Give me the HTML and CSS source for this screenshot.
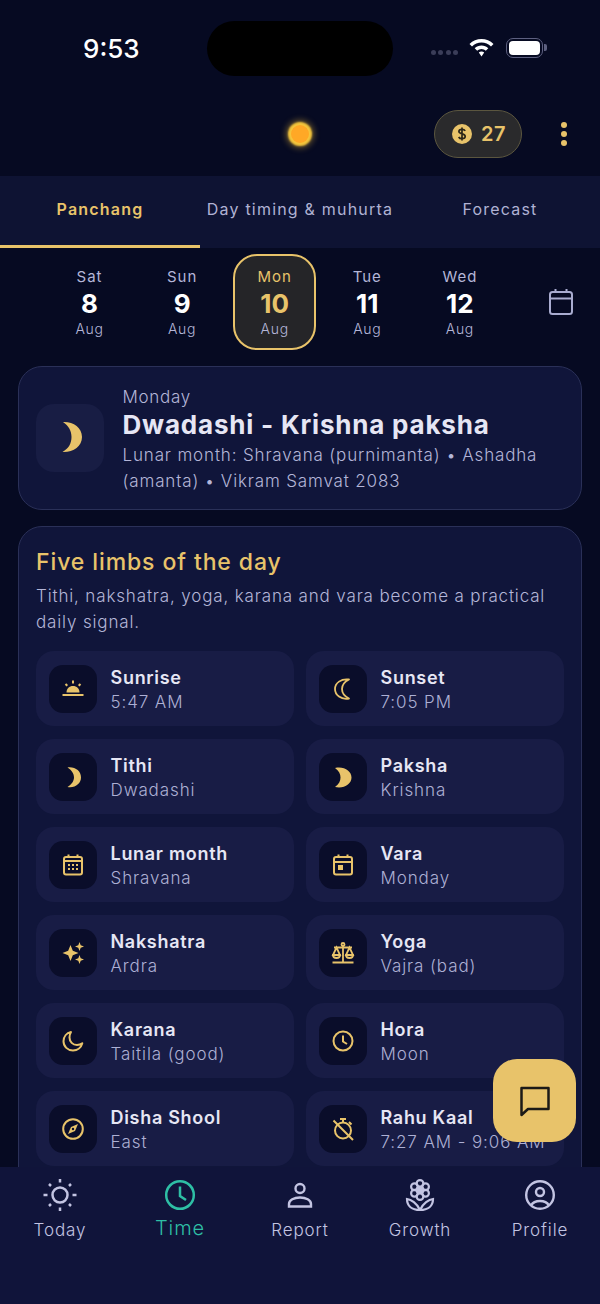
FILE: index.html
```html
<!DOCTYPE html>
<html lang="en">
<head>
    <meta charset="UTF-8">
    <meta name="viewport" content="width=device-width, initial-scale=1.0">
    <title>Panchang</title>
    <link rel="stylesheet" href="styles.css">
</head>
<body>
<div class="screen">

    <div class="status-bar">
        <span class="clock">9:53</span>
        <div class="island"></div>
        <div class="status-icons">
            <div class="signal"><i></i><i></i><i></i><i></i></div>
            <svg class="wifi" viewBox="0 0 25 19" width="25" height="19"><path d="M12.500 1C8 1 3.700 2.800 .5 5.900L3 8.500C5.500 6 8.900 4.500 12.500 4.500S19.500 6 22 8.500L24.500 5.900C21.300 2.800 17 1 12.500 1Z M12.500 7.500C10 7.500 7.500 8.500 5.700 10.300L8.200 12.800C9.400 11.700 10.900 11 12.500 11S15.600 11.700 16.800 12.800L19.300 10.300C17.500 8.500 15 7.500 12.500 7.500Z M12.500 13.500C11.500 13.500 10.500 13.900 9.800 14.600L12.500 18.500L15.200 14.600C14.500 13.900 13.500 13.500 12.500 13.500Z" fill="#fff"/></svg>
            <div class="battery"><div class="battery-level"></div></div>
        </div>
    </div>

    <header class="top-bar">
        <div class="sun-dot"></div>
        <div class="coins">
            <svg viewBox="0 0 20 20" width="20" height="20"><circle cx="10" cy="10" r="10" fill="#e8c36a"/><path d="M13.200 6.800C12.700 5.900 11.500 5.300 10 5.300C8.200 5.300 6.900 6.200 6.900 7.600C6.900 10.600 13.200 9.200 13.200 12.300C13.200 13.700 11.800 14.700 10 14.700C8.400 14.700 7.200 14 6.700 13M10 3.500V16.500" fill="none" stroke="#2b2618" stroke-width="1.700"/></svg>
            <span>27</span>
        </div>
        <div class="kebab"><i></i><i></i><i></i></div>
    </header>

    <nav class="tabs">
        <a class="tab active">Panchang</a>
        <a class="tab">Day timing &amp; muhurta</a>
        <a class="tab">Forecast</a>
    </nav>

    <div class="days">
        <div class="day"><span class="dow">Sat</span><b>8</b><span class="mon">Aug</span></div>
        <div class="day"><span class="dow">Sun</span><b>9</b><span class="mon">Aug</span></div>
        <div class="day selected"><span class="dow">Mon</span><b>10</b><span class="mon">Aug</span></div>
        <div class="day"><span class="dow">Tue</span><b>11</b><span class="mon">Aug</span></div>
        <div class="day"><span class="dow">Wed</span><b>12</b><span class="mon">Aug</span></div>
        <svg class="cal-btn" viewBox="0 0 26 28" width="26" height="28" fill="none" stroke="#a9acd0" stroke-width="2"><rect x="2" y="4" width="22" height="22" rx="2.500"/><path d="M2 10.500H24M7.500 1V4M18.500 1V4"/></svg>
    </div>

    <main class="content">
        <section class="hero-card">
            <div class="hero-icon">
                <svg viewBox="0 0 24 36" width="24" height="36"><path d="M2 2C12 1.500 21 7.500 21 17C21 26.500 12 32.500 1.500 32C7.500 28.500 10.500 23.500 10.500 17C10.500 11 7.500 5.500 2 2Z" fill="#e8c36a"/></svg>
            </div>
            <div class="hero-text">
                <div class="hero-day">Monday</div>
                <h1>Dwadashi - Krishna paksha</h1>
                <p>Lunar month: Shravana (purnimanta) • Ashadha (amanta) • Vikram Samvat 2083</p>
            </div>
        </section>

        <section class="limbs-card">
            <h2>Five limbs of the day</h2>
            <p class="limbs-sub">Tithi, nakshatra, yoga, karana and vara become a practical daily signal.</p>
            <div class="limbs-grid">

                <div class="limb">
                    <div class="limb-icon"><svg viewBox="0 0 24 24" width="24" height="24"><path d="M5.500 15.500C5.500 11.500 8.300 9 12 9S18.500 11.500 18.500 15.500Z" fill="#e8c36a"/><path d="M1.500 18H22.500" stroke="#e8c36a" stroke-width="2"/><path d="M12 3.500V6.500M4.500 7L6.300 8.800M19.500 7L17.700 8.800" stroke="#e8c36a" stroke-width="2" fill="none"/></svg></div>
                    <div class="limb-text"><b>Sunrise</b><span>5:47 AM</span></div>
                </div>
                <div class="limb">
                    <div class="limb-icon"><svg viewBox="0 0 24 24" width="24" height="24"><path d="M18 2.500C10 1.500 4 6 4 12C4 18 10 23 18 21.500C14 19.500 11 16 11 12C11 8 14 4.500 18 2.500Z" fill="none" stroke="#e8c36a" stroke-width="1.800" stroke-linejoin="round"/></svg></div>
                    <div class="limb-text"><b>Sunset</b><span>7:05 PM</span></div>
                </div>

                <div class="limb">
                    <div class="limb-icon"><svg viewBox="0 0 24 24" width="24" height="24"><path d="M6.500 2.500C14 1.500 20 6 20 12.500C20 18.500 14 23.500 6.500 22C10.500 19.500 13 16 13 12.500C13 8.500 10.500 5 6.500 2.500Z" fill="#e8c36a"/></svg></div>
                    <div class="limb-text"><b>Tithi</b><span>Dwadashi</span></div>
                </div>
                <div class="limb">
                    <div class="limb-icon"><svg viewBox="0 0 24 24" width="24" height="24"><path d="M4 3C13 1 20.500 6 20.500 12.500C20.500 19 13 24 4 22C8 19 9.500 16 9.500 12.500C9.500 9 8 6 4 3Z" fill="#e8c36a"/></svg></div>
                    <div class="limb-text"><b>Paksha</b><span>Krishna</span></div>
                </div>

                <div class="limb">
                    <div class="limb-icon"><svg viewBox="0 0 24 24" width="24" height="24" fill="none" stroke="#e8c36a" stroke-width="2"><rect x="3" y="4" width="18" height="17.500" rx="2"/><path d="M3 8H21M7.500 1.500V4M16.500 1.500V4"/><path d="M7 12H9M11 12H13M15 12H17M7 16H9M11 16H13M15 16H17"/></svg></div>
                    <div class="limb-text"><b>Lunar month</b><span>Shravana</span></div>
                </div>
                <div class="limb">
                    <div class="limb-icon"><svg viewBox="0 0 24 24" width="24" height="24" fill="none" stroke="#e8c36a" stroke-width="2"><rect x="3" y="4" width="18" height="17.500" rx="2"/><path d="M3 9H21M7.500 1.500V4M16.500 1.500V4"/><rect x="7" y="12" width="5" height="5" fill="#e8c36a" stroke="none"/></svg></div>
                    <div class="limb-text"><b>Vara</b><span>Monday</span></div>
                </div>

                <div class="limb">
                    <div class="limb-icon"><svg viewBox="0 0 24 24" width="24" height="24" fill="#e8c36a"><path d="M9.500 4L11.800 9.700L17.500 12L11.800 14.300L9.500 20L7.200 14.300L1.500 12L7.200 9.700Z"/><path d="M18.500 1L19.700 4.300L23 5.500L19.700 6.700L18.500 10L17.300 6.700L14 5.500L17.300 4.300Z"/><path d="M18.500 14L19.700 17.300L23 18.500L19.700 19.700L18.500 23L17.300 19.700L14 18.500L17.300 17.300Z"/></svg></div>
                    <div class="limb-text"><b>Nakshatra</b><span>Ardra</span></div>
                </div>
                <div class="limb">
                    <div class="limb-icon"><svg viewBox="0 0 24 24" width="24" height="24" fill="none" stroke="#e8c36a" stroke-width="1.800"><circle cx="12" cy="3.500" r="1.500"/><path d="M12 5V21M1.500 21.500H22.500M3 6.500H21"/><path d="M5.500 6.500L2 14H9ZM18.500 6.500L15 14H22Z"/><path d="M2 14C2 18 9 18 9 14ZM15 14C15 18 22 18 22 14Z"/></svg></div>
                    <div class="limb-text"><b>Yoga</b><span>Vajra (bad)</span></div>
                </div>

                <div class="limb">
                    <div class="limb-icon"><svg viewBox="0 0 24 24" width="24" height="24"><path d="M10 3C5.500 4 2.500 7.800 2.500 12.300C2.500 17.500 6.700 21.500 12 21.500C16.500 21.500 20.200 18.500 21.300 14.300C19.800 15.500 18 16 16 16C11.800 16 8.500 12.800 8.500 8.500C8.500 6.500 9 4.500 10 3Z" fill="none" stroke="#e8c36a" stroke-width="2" stroke-linejoin="round"/></svg></div>
                    <div class="limb-text"><b>Karana</b><span>Taitila (good)</span></div>
                </div>
                <div class="limb">
                    <div class="limb-icon"><svg viewBox="0 0 24 24" width="24" height="24" fill="none" stroke="#e8c36a" stroke-width="2"><circle cx="12" cy="12" r="9.500"/><path d="M12 6.500V12.500L16 15"/></svg></div>
                    <div class="limb-text"><b>Hora</b><span>Moon</span></div>
                </div>

                <div class="limb">
                    <div class="limb-icon"><svg viewBox="0 0 24 24" width="24" height="24" fill="none" stroke="#e8c36a" stroke-width="2"><circle cx="12" cy="12" r="9.800"/><path d="M17 7L14 14L7 17L10 10Z" fill="#e8c36a" stroke="none"/><circle cx="12" cy="12" r="1.200" fill="#0a0d2a" stroke="none"/></svg></div>
                    <div class="limb-text"><b>Disha Shool</b><span>East</span></div>
                </div>
                <div class="limb">
                    <div class="limb-icon"><svg viewBox="0 0 24 24" width="24" height="24" fill="none" stroke="#e8c36a" stroke-width="2"><circle cx="12" cy="13.500" r="8"/><path d="M9 2H15M12 2V5M18 5L20.500 7.500M2.500 3.500L22 23"/></svg></div>
                    <div class="limb-text"><b>Rahu Kaal</b><span>7:27 AM - 9:06 AM</span></div>
                </div>

            </div>
        </section>

        <button class="chat-fab">
            <svg viewBox="0 0 34 34" width="34" height="34" fill="none" stroke="#1c1a17" stroke-width="2.500" stroke-linejoin="round"><path d="M3.500 4H30.500V25H10L3.500 31Z"/></svg>
        </button>
    </main>

    <nav class="bottom-nav">
        <a class="nav-item">
            <svg viewBox="0 0 34 34" width="34" height="34" fill="none" stroke="#c3c4e2" stroke-width="2.500"><circle cx="17" cy="17" r="7.500"/><path d="M17 1V4.500M17 29.500V33M.5 17H4.500M29.500 17H33.500M6 6L8 8M26 26L28 28M6 28L8 26M26 8L28 6"/></svg>
            <span>Today</span>
        </a>
        <a class="nav-item current">
            <svg viewBox="0 0 34 34" width="34" height="34" fill="none" stroke="#2ebfa5" stroke-width="2.500"><circle cx="17" cy="17" r="13.800"/><path d="M17 8.500V18L23 22"/></svg>
            <span>Time</span>
        </a>
        <a class="nav-item">
            <svg viewBox="0 0 34 34" width="34" height="34" fill="none" stroke="#c3c4e2" stroke-width="2.400"><circle cx="17" cy="10.500" r="4.500"/><path d="M6 28.500V26C6 22 11 19.500 17 19.500S28 22 28 26V28.500Z"/></svg>
            <span>Report</span>
        </a>
        <a class="nav-item">
            <svg viewBox="0 0 34 34" width="34" height="34" fill="none" stroke="#c3c4e2" stroke-width="2.200"><circle cx="17" cy="12" r="3.500" fill="#c3c4e2"/><circle cx="17" cy="5.500" r="3.400"/><circle cx="17" cy="18.500" r="3.400"/><circle cx="11.500" cy="8.800" r="3.400"/><circle cx="22.500" cy="8.800" r="3.400"/><circle cx="11.500" cy="15.200" r="3.400"/><circle cx="22.500" cy="15.200" r="3.400"/><path d="M17 32C14 25 8 21.500 4 21C4 28 9 32 17 32ZM17 32C20 25 26 21.500 30 21C30 28 25 32 17 32Z"/></svg>
            <span>Growth</span>
        </a>
        <a class="nav-item">
            <svg viewBox="0 0 34 34" width="34" height="34" fill="none" stroke="#c3c4e2" stroke-width="2.400"><circle cx="17" cy="17" r="13.800"/><circle cx="17" cy="14" r="4"/><path d="M8 27.500C10 24 13 23 17 23S24 24 26 27.500"/></svg>
            <span>Profile</span>
        </a>
    </nav>

</div>
</body>
</html>
```

FILE: styles.css
```css
/* Reset */
* {
    margin: 0;
    padding: 0;
    box-sizing: border-box;
}

body {
    font-family: Inter, "Liberation Sans", sans-serif;
    background-color: #060a22;
    color: #e9e9f6;
}

.screen {
    width: 600px;
    height: 1304px;
    display: flex;
    flex-direction: column;
    overflow: hidden;
    background-color: #060a22;
}

/* Status bar */
.status-bar {
    height: 92px;
    flex: none;
    display: flex;
    justify-content: space-between;
    align-items: flex-start;
    position: relative;
    padding: 34px 57px 0 83px;
}

.clock {
    font-size: 26px;
    line-height: 30px;
    font-weight: 500;
    color: #fff;
}

.island {
    position: absolute;
    left: 207px;
    top: 21px;
    width: 186px;
    height: 55px;
    border-radius: 28px;
    background-color: #000;
}

.status-icons {
    display: flex;
    align-items: center;
    gap: 11px;
    height: 30px;
    margin-top: -1px;
}

.signal {
    display: flex;
    gap: 2.500px;
    margin-top: 8px;
}

.signal i {
    width: 5px;
    height: 5px;
    border-radius: 50%;
    background-color: #3a3d58;
}

.wifi {
    margin-top: -1px;
}

.battery {
    width: 37px;
    height: 20px;
    border: 1.500px solid #5d6080;
    border-radius: 7px;
    padding: 2px;
    margin-left: 1px;
    position: relative;
}

.battery::after {
    content: "";
    position: absolute;
    right: -5px;
    top: 5px;
    width: 3px;
    height: 7px;
    border-radius: 0 2px 2px 0;
    background-color: #5d6080;
}

.battery-level {
    height: 100%;
    border-radius: 4px;
    background-color: #fff;
}

/* Top bar */
.top-bar {
    height: 84px;
    flex: none;
    position: relative;
    display: flex;
    justify-content: flex-end;
    align-items: center;
    gap: 39px;
    padding: 0 33px 0 0;
}

.sun-dot {
    position: absolute;
    left: 291px;
    top: 33px;
    width: 18px;
    height: 18px;
    border-radius: 50%;
    background-color: #ffa826;
    box-shadow: 0 0 2px 3px #f5c63c, 0 0 6px 5px rgba(242, 190, 60, 0.4);
}

.coins {
    width: 88px;
    height: 48px;
    display: flex;
    align-items: center;
    justify-content: center;
    gap: 9px;
    padding-left: 2px;
    border: 1.500px solid #5b563f;
    border-radius: 24px;
    background-color: #2a2a2c;
    color: #e8c36a;
    font-size: 20px;
    font-weight: 600;
    letter-spacing: 0.5px;
}

.kebab {
    display: flex;
    flex-direction: column;
    gap: 3px;
}

.kebab i {
    width: 6px;
    height: 6px;
    border-radius: 50%;
    background-color: #e8c36a;
}

/* Tabs */
.tabs {
    height: 72px;
    flex: none;
    display: flex;
    background-color: #0e1333;
}

.tab {
    flex: 1;
    display: flex;
    align-items: center;
    justify-content: center;
    padding-bottom: 3px;
    font-size: 16px;
    letter-spacing: 1.2px;
    color: #b0b2d4;
    border-bottom: 3px solid transparent;
}

.tab.active {
    color: #e8c36a;
    font-weight: 600;
    border-bottom-color: #e8c36a;
}

/* Date strip */
.days {
    height: 118px;
    flex: none;
    display: flex;
    align-items: flex-start;
    padding: 6px 0 0 48px;
    position: relative;
}

.day {
    width: 83px;
    height: 96px;
    margin-right: 9.600px;
    display: flex;
    flex-direction: column;
    align-items: center;
    padding-top: 12px;
    border: 2px solid transparent;
    border-radius: 24px;
    color: #b4b6d8;
}

.day.selected {
    border-color: #e8c36a;
    background-color: #252528;
}

.dow {
    font-size: 15px;
    line-height: 18px;
    letter-spacing: 1px;
}

.day b {
    font-size: 26px;
    line-height: 36px;
    margin-bottom: -2px;
    font-weight: 700;
    color: #fff;
}

.mon {
    font-size: 14px;
    line-height: 18px;
    font-weight: 300;
    letter-spacing: 0.7px;
}

.day.selected .dow,
.day.selected b {
    color: #e8c36a;
}

.cal-btn {
    position: absolute;
    left: 548px;
    top: 40px;
}

/* Scrolling content */
.content {
    flex: 1;
    min-height: 0;
    padding: 0 18px;
    position: relative;
    overflow: hidden;
}

.hero-card,
.limbs-card {
    border: 1.500px solid #2a3058;
    border-radius: 24px;
    background-color: #10153a;
}

.hero-card {
    height: 144px;
    display: flex;
    align-items: center;
    gap: 19px;
    padding: 0 16.500px;
    margin-bottom: 16px;
}

.hero-icon {
    width: 68px;
    height: 68px;
    flex: none;
    display: flex;
    align-items: center;
    justify-content: center;
    border-radius: 18px;
    background-color: #181d44;
}

.hero-icon svg {
    margin-left: 6px;
}

.hero-text {
    padding-top: 4px;
}

.hero-day {
    font-size: 17px;
    line-height: 22px;
    font-weight: 300;
    color: #b4b6d8;
    letter-spacing: 0.7px;
}

.hero-text h1 {
    font-size: 26px;
    line-height: 34px;
    font-weight: 700;
    letter-spacing: 0.8px;
    color: #e6e6f4;
}

.hero-text p {
    font-size: 17px;
    line-height: 26px;
    font-weight: 300;
    letter-spacing: 0.85px;
    color: #b4b6d8;
}

.limbs-card {
    padding: 18px 16.500px 40px 17px;
}

.limbs-card h2 {
    font-size: 23px;
    line-height: 34px;
    font-weight: 500;
    letter-spacing: 0.9px;
    color: #e8c36a;
}

.limbs-sub {
    font-size: 17px;
    line-height: 26px;
    font-weight: 300;
    letter-spacing: 0.85px;
    color: #b4b6d8;
    margin-top: 4px;
    margin-bottom: 16px;
}

.limbs-grid {
    display: grid;
    grid-template-columns: 258px 258px;
    gap: 13px 12px;
    margin-left: -0.5px;
}

.limb {
    height: 75px;
    display: flex;
    align-items: center;
    gap: 14px;
    padding: 0 13px;
    border-radius: 18px;
    background-color: #181c45;
}

.limb-icon {
    width: 48px;
    height: 48px;
    flex: none;
    display: flex;
    align-items: center;
    justify-content: center;
    border-radius: 14px;
    background-color: #0a0d2a;
}

.limb-text {
    display: flex;
    flex-direction: column;
    white-space: nowrap;
    padding-top: 2px;
}

.limb-text b {
    font-size: 18px;
    line-height: 24px;
    font-weight: 600;
    letter-spacing: 0.7px;
    color: #e6e6f4;
}

.limb-text span {
    font-size: 17px;
    line-height: 24px;
    font-weight: 300;
    letter-spacing: 0.9px;
    color: #adb0d4;
}

.chat-fab {
    position: absolute;
    right: 24px;
    bottom: 25px;
    width: 83px;
    height: 83px;
    display: flex;
    align-items: center;
    justify-content: center;
    border: none;
    border-radius: 24px;
    background-color: #e8c36a;
}

/* Bottom nav */
.bottom-nav {
    height: 137px;
    flex: none;
    display: flex;
    align-items: flex-start;
    background-color: #10143a;
}

.nav-item {
    width: 120px;
    padding-top: 11px;
    display: flex;
    flex-direction: column;
    align-items: center;
    color: #c3c4e2;
    font-size: 17px;
    font-weight: 300;
    line-height: 24px;
    letter-spacing: 0.9px;
}

.nav-item span {
    margin-top: 6px;
}

.nav-item.current {
    color: #2ebfa5;
    font-size: 20px;
}

.nav-item.current span {
    margin-top: 4px;
}
```
